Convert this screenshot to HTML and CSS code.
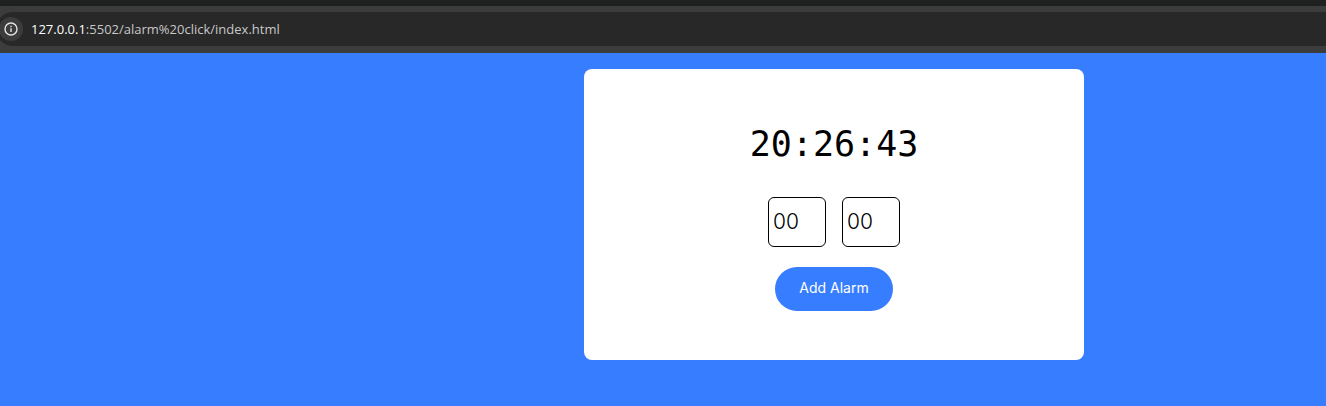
FILE: index.html
```
<!DOCTYPE html>
<html lang="en">
<head>
<meta charset="utf-8">
<title>Alarm</title>
<link rel="stylesheet" href="styles.css">
</head>
<body>
<header class="browser">
  <div class="address-bar">
    <button class="site-info" type="button" aria-label="Site information">
      <svg viewBox="0 0 14 14" width="14" height="14" fill="none" stroke="currentColor" stroke-width="1.4">
        <circle cx="7" cy="7" r="6"/>
        <path d="M7 6.2V10M7 3.8V5.2"/>
      </svg>
    </button>
    <div class="url"><span class="host">127.0.0.1</span>:5502/alarm%20click/index.html</div>
  </div>
</header>
<main class="page">
  <section class="card">
    <div class="clock">20:26:43</div>
    <form class="alarm-form">
      <div class="inputs">
        <input class="time-input" type="number" value="00" min="0" max="23" aria-label="Hour">
        <input class="time-input" type="number" value="00" min="0" max="59" aria-label="Minute">
      </div>
      <button class="add-alarm" type="button">Add Alarm</button>
    </form>
  </section>
</main>
</body>
</html>
```
FILE: styles.css
```
* {
  box-sizing: border-box;
}

body {
  margin: 0;
  min-height: 100vh;
  display: flex;
  flex-direction: column;
  background: #377dff;
  font-family: Inter, sans-serif;
}

.browser {
  background: #3c3c3c;
  border-top: 6px solid #1f2020;
  padding: 6px 0 7px;
}

.address-bar {
  display: flex;
  align-items: center;
  gap: 8px;
  height: 34px;
  margin-left: -4px;
  padding-left: 3px;
  background: #282828;
  border-radius: 17px 0 0 17px;
}

.site-info {
  display: grid;
  place-items: center;
  width: 24px;
  height: 24px;
  padding: 0;
  border: 0;
  border-radius: 50%;
  background: #3c3c3c;
  color: #e3e3e3;
}

.url {
  color: #c7c7c7;
  font: 13px/20px "Open Sans", sans-serif;
}

.host {
  color: #ffffff;
}

.page {
  flex: 1;
  padding: 16px 0 16px 342px;
}

.card {
  display: flex;
  flex-direction: column;
  align-items: center;
  gap: 29px;
  width: 100%;
  max-width: 500px;
  margin: 0 auto;
  padding: 51px 16px 49px;
  background: #ffffff;
  border-radius: 8px;
}

.clock {
  color: #000000;
  font: 35px/48px "DejaVu Sans Mono", monospace;
}

.alarm-form {
  display: flex;
  flex-direction: column;
  align-items: center;
  gap: 20px;
}

.inputs {
  display: flex;
  gap: 16px;
}

.time-input {
  width: 58px;
  height: 50px;
  padding: 0 4px 2px;
  border: 1px solid #000000;
  border-radius: 6px;
  background: #ffffff;
  color: #000000;
  font: 300 21px/30px Inter, sans-serif;
  appearance: textfield;
}

.add-alarm {
  padding: 11px 24px 13px;
  border: 0;
  border-radius: 22px;
  background: #377dff;
  color: #ffffff;
  font: 14px/20px Inter, sans-serif;
}
```
